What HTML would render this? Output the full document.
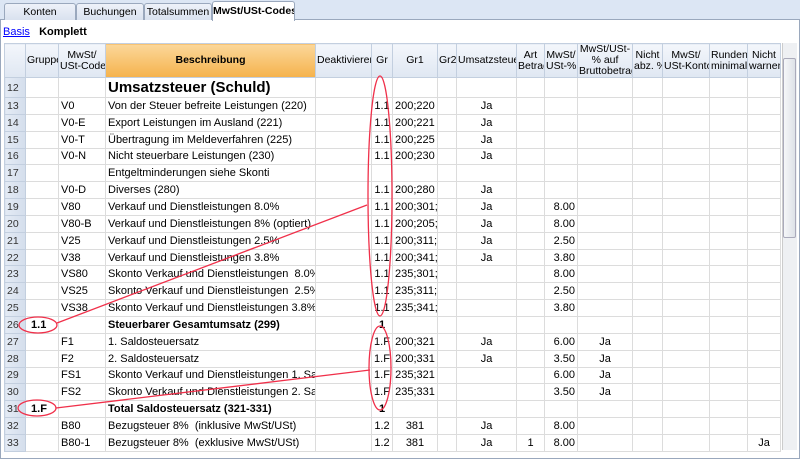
<!DOCTYPE html>
<html><head><meta charset="utf-8"><style>
*{margin:0;padding:0;box-sizing:border-box}
body{width:800px;height:459px;overflow:hidden;background:#dce6f4;font-family:"Liberation Sans",sans-serif;font-size:11px;color:#000;position:relative}
.tabs{position:absolute;left:0;top:0;width:800px;height:20px;background:#dce6f4;border-bottom:1px solid #9aa8bd}
.tab{position:absolute;top:3px;height:17px;border:1px solid #9aa8bd;border-bottom:none;background:linear-gradient(#eef2f9,#d9e2ef);font-size:10.5px;text-align:center;line-height:16px;border-radius:3px 3px 0 0;white-space:nowrap;overflow:hidden}
.tab.act{top:1px;height:20px;background:#fff;font-weight:bold;z-index:2;line-height:18px}
.panel{position:absolute;left:0;top:20px;width:800px;height:439px;background:#fff;border:1px solid #9aa8bd;border-top:none}
.basis{position:absolute;left:3px;top:26px;font-size:11px}
.basis a{color:#00f;text-decoration:underline}
table{position:absolute;left:4px;top:43px;width:776px;border-collapse:collapse;table-layout:fixed}
td,th{border:1px solid #dcdcdc;overflow:hidden;white-space:nowrap;height:16.85px;padding:0 2px;font-weight:normal;font-size:11px}
th{background:linear-gradient(#f3f6fb,#dfe7f2);border-color:#c3cfdf;height:33px;line-height:11px;text-align:center;vertical-align:middle;font-size:10.5px;padding:0 1px;white-space:nowrap}
th.or{background:linear-gradient(#fbd79a,#f5b24c);font-weight:bold}
td.n{background:linear-gradient(90deg,#e4ebf5,#d4deec);color:#333;border-color:#c3cfdf;font-size:10.5px}
.c{text-align:center}.r{text-align:right}.b{font-weight:bold}
.big{font-size:15px;font-weight:bold}
.sb{position:absolute;left:782px;top:43px;width:15px;height:407px;background:#eef0f3;border-left:1px solid #ccc}
.thumb{position:absolute;left:783px;top:58px;width:13px;height:180px;background:linear-gradient(90deg,#f6f7f9,#dde1e7);border:1px solid #aab;border-radius:2px}
svg{position:absolute;left:0;top:0}
</style></head><body>
<div class="tabs">
<div class="tab" style="left:4px;width:72px">Konten</div>
<div class="tab" style="left:76px;width:68px">Buchungen</div>
<div class="tab" style="left:144px;width:68px">Totalsummen</div>
<div class="tab act" style="left:212px;width:83px">MwSt/USt-Codes</div>
</div>
<div class="panel"></div>
<div class="basis"><a>Basis</a> &nbsp;&nbsp;<b>Komplett</b></div>
<table>
<colgroup><col style="width:21px"><col style="width:33px"><col style="width:47px"><col style="width:210px"><col style="width:56px"><col style="width:21px"><col style="width:45px"><col style="width:19px"><col style="width:60px"><col style="width:28px"><col style="width:33px"><col style="width:55px"><col style="width:30px"><col style="width:47px"><col style="width:38px"><col style="width:33px"></colgroup>
<tr><th></th><th>Gruppe</th><th>MwSt/<br>USt-Code</th><th class="or">Beschreibung</th><th>Deaktivieren</th><th>Gr</th><th>Gr1</th><th>Gr2</th><th>Umsatzsteuer</th><th>Art<br>Betrag</th><th>MwSt/<br>USt-%</th><th>MwSt/USt-<br>% auf<br>Bruttobetrag</th><th>Nicht<br>abz. %</th><th>MwSt/<br>USt-Konto</th><th>Runden<br>minimal</th><th>Nicht<br>warnen</th></tr>
<tr style="height:20px"><td class="n">12</td><td></td><td></td><td class="big">Umsatzsteuer (Schuld)</td><td></td><td></td><td></td><td></td><td></td><td></td><td></td><td></td><td></td><td></td><td></td><td></td></tr>
<tr><td class="n">13</td><td></td><td>V0</td><td>Von der Steuer befreite Leistungen (220)</td><td></td><td class="c">1.1</td><td>200;220</td><td></td><td class="c">Ja</td><td></td><td></td><td></td><td></td><td></td><td></td><td></td></tr>
<tr><td class="n">14</td><td></td><td>V0-E</td><td>Export Leistungen im Ausland (221)</td><td></td><td class="c">1.1</td><td>200;221</td><td></td><td class="c">Ja</td><td></td><td></td><td></td><td></td><td></td><td></td><td></td></tr>
<tr><td class="n">15</td><td></td><td>V0-T</td><td>Übertragung im Meldeverfahren (225)</td><td></td><td class="c">1.1</td><td>200;225</td><td></td><td class="c">Ja</td><td></td><td></td><td></td><td></td><td></td><td></td><td></td></tr>
<tr><td class="n">16</td><td></td><td>V0-N</td><td>Nicht steuerbare Leistungen (230)</td><td></td><td class="c">1.1</td><td>200;230</td><td></td><td class="c">Ja</td><td></td><td></td><td></td><td></td><td></td><td></td><td></td></tr>
<tr><td class="n">17</td><td></td><td></td><td>Entgeltminderungen siehe Skonti</td><td></td><td></td><td></td><td></td><td></td><td></td><td></td><td></td><td></td><td></td><td></td><td></td></tr>
<tr><td class="n">18</td><td></td><td>V0-D</td><td>Diverses (280)</td><td></td><td class="c">1.1</td><td>200;280</td><td></td><td class="c">Ja</td><td></td><td></td><td></td><td></td><td></td><td></td><td></td></tr>
<tr><td class="n">19</td><td></td><td>V80</td><td>Verkauf und Dienstleistungen 8.0%</td><td></td><td class="c">1.1</td><td>200;301;</td><td></td><td class="c">Ja</td><td></td><td class="r">8.00</td><td></td><td></td><td></td><td></td><td></td></tr>
<tr><td class="n">20</td><td></td><td>V80-B</td><td>Verkauf und Dienstleistungen 8% (optiert)</td><td></td><td class="c">1.1</td><td>200;205;3</td><td></td><td class="c">Ja</td><td></td><td class="r">8.00</td><td></td><td></td><td></td><td></td><td></td></tr>
<tr><td class="n">21</td><td></td><td>V25</td><td>Verkauf und Dienstleistungen 2.5%</td><td></td><td class="c">1.1</td><td>200;311;</td><td></td><td class="c">Ja</td><td></td><td class="r">2.50</td><td></td><td></td><td></td><td></td><td></td></tr>
<tr><td class="n">22</td><td></td><td>V38</td><td>Verkauf und Dienstleistungen 3.8%</td><td></td><td class="c">1.1</td><td>200;341;</td><td></td><td class="c">Ja</td><td></td><td class="r">3.80</td><td></td><td></td><td></td><td></td><td></td></tr>
<tr><td class="n">23</td><td></td><td>VS80</td><td>Skonto Verkauf und Dienstleistungen &nbsp;8.0%</td><td></td><td class="c">1.1</td><td>235;301;</td><td></td><td></td><td></td><td class="r">8.00</td><td></td><td></td><td></td><td></td><td></td></tr>
<tr><td class="n">24</td><td></td><td>VS25</td><td>Skonto Verkauf und Dienstleistungen &nbsp;2.5%</td><td></td><td class="c">1.1</td><td>235;311;</td><td></td><td></td><td></td><td class="r">2.50</td><td></td><td></td><td></td><td></td><td></td></tr>
<tr><td class="n">25</td><td></td><td>VS38</td><td>Skonto Verkauf und Dienstleistungen 3.8%</td><td></td><td class="c">1.1</td><td>235;341;</td><td></td><td></td><td></td><td class="r">3.80</td><td></td><td></td><td></td><td></td><td></td></tr>
<tr><td class="n">26</td><td class="b">&nbsp;1.1</td><td></td><td class="b">Steuerbarer Gesamtumsatz (299)</td><td></td><td class="c b">1</td><td></td><td></td><td></td><td></td><td></td><td></td><td></td><td></td><td></td><td></td></tr>
<tr><td class="n">27</td><td></td><td>F1</td><td>1. Saldosteuersatz</td><td></td><td class="c">1.F</td><td class="c">200;321</td><td></td><td class="c">Ja</td><td></td><td class="r">6.00</td><td class="c">Ja</td><td></td><td></td><td></td><td></td></tr>
<tr><td class="n">28</td><td></td><td>F2</td><td>2. Saldosteuersatz</td><td></td><td class="c">1.F</td><td class="c">200;331</td><td></td><td class="c">Ja</td><td></td><td class="r">3.50</td><td class="c">Ja</td><td></td><td></td><td></td><td></td></tr>
<tr><td class="n">29</td><td></td><td>FS1</td><td>Skonto Verkauf und Dienstleistungen 1. Saldosteuersatz</td><td></td><td class="c">1.F</td><td class="c">235;321</td><td></td><td></td><td></td><td class="r">6.00</td><td class="c">Ja</td><td></td><td></td><td></td><td></td></tr>
<tr><td class="n">30</td><td></td><td>FS2</td><td>Skonto Verkauf und Dienstleistungen 2. Saldosteuersatz</td><td></td><td class="c">1.F</td><td class="c">235;331</td><td></td><td></td><td></td><td class="r">3.50</td><td class="c">Ja</td><td></td><td></td><td></td><td></td></tr>
<tr><td class="n">31</td><td class="b">&nbsp;1.F</td><td></td><td class="b">Total Saldosteuersatz (321-331)</td><td></td><td class="c b">1</td><td></td><td></td><td></td><td></td><td></td><td></td><td></td><td></td><td></td><td></td></tr>
<tr><td class="n">32</td><td></td><td>B80</td><td>Bezugsteuer 8% &nbsp;(inklusive MwSt/USt)</td><td></td><td class="c">1.2</td><td class="c">381</td><td></td><td class="c">Ja</td><td></td><td class="r">8.00</td><td></td><td></td><td></td><td></td><td></td></tr>
<tr><td class="n">33</td><td></td><td>B80-1</td><td>Bezugsteuer 8% &nbsp;(exklusive MwSt/USt)</td><td></td><td class="c">1.2</td><td class="c">381</td><td></td><td class="c">Ja</td><td class="c">1</td><td class="r">8.00</td><td></td><td></td><td></td><td></td><td class="c">Ja</td></tr>
</table>
<div class="sb"></div><div class="thumb"></div>
<svg width="800" height="459" fill="none" stroke="#f0304a" stroke-width="1.3">
<ellipse cx="380" cy="196" rx="12" ry="120"/>
<ellipse cx="38" cy="325" rx="19" ry="8"/>
<line x1="57" y1="323" x2="367" y2="205"/>
<ellipse cx="380" cy="368" rx="11" ry="42"/>
<ellipse cx="37" cy="408" rx="19" ry="8"/>
<line x1="56" y1="408" x2="370" y2="370"/>
</svg>
</body></html>
